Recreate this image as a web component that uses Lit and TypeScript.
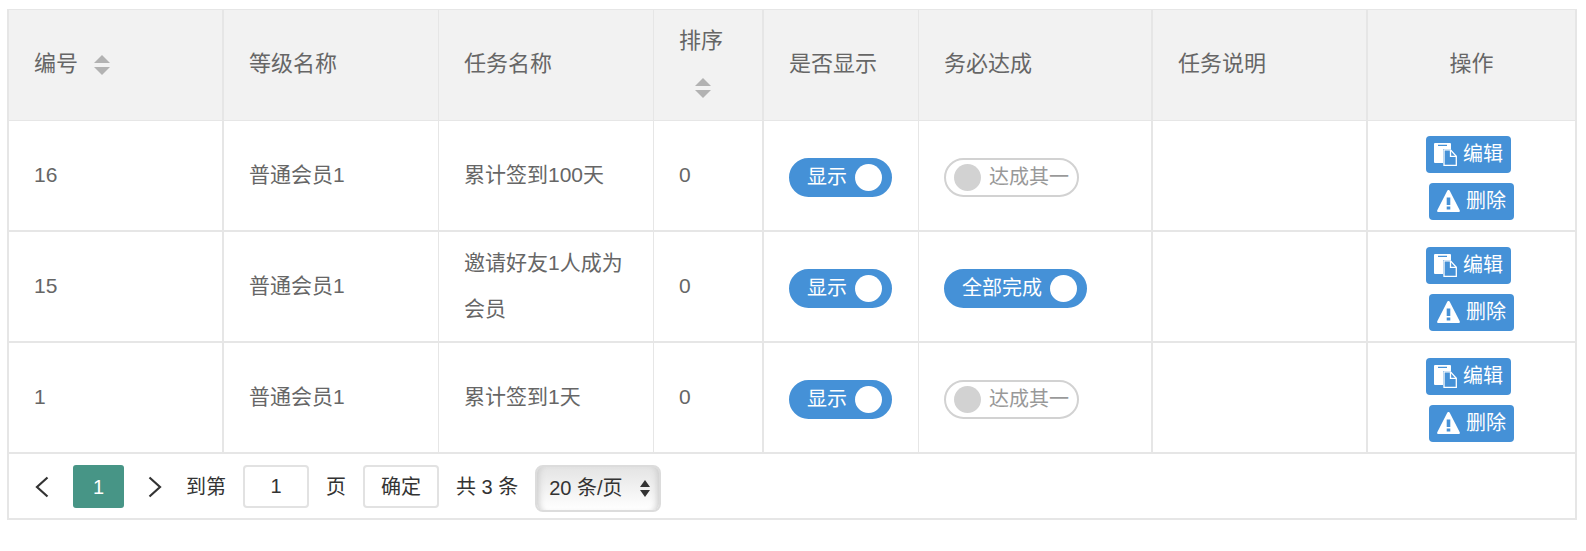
import { LitElement, html, css, svg, nothing } from "lit";
import { customElement, property, state } from "lit/decorators.js";

const fontStack = css`"Liberation Sans", "Noto Sans CJK SC", sans-serif`;

interface Task {
  id: number;
  level: string;
  name: string;
  sort: number;
  shown: boolean;
  all: boolean;
  note: string;
}

@customElement("toggle-switch")
class ToggleSwitch extends LitElement {
  @property({ type: Boolean }) checked = false;
  @property() on = "";
  @property() off = "";

  static styles = css`
    :host {
      display: inline-block;
      vertical-align: top;
    }
    .switch {
      position: relative;
      box-sizing: border-box;
      display: flex;
      align-items: center;
      gap: 8px;
      height: 39px;
      padding: 0 8px;
      border: 2px solid #d2d2d2;
      border-radius: 20px;
      background: #fff;
      color: #999;
      font: 20px/35px ${fontStack};
      white-space: nowrap;
      cursor: pointer;
    }
    .switch.on {
      flex-direction: row-reverse;
      padding-left: 16px;
      border-color: #4591d7;
      background: #4591d7;
      color: #fff;
    }
    .box {
      position: absolute;
      inset: 0;
      width: 100%;
      height: 100%;
      margin: 0;
      opacity: 0;
      cursor: pointer;
    }
    .knob {
      width: 27px;
      height: 27px;
      border-radius: 50%;
      background: #d2d2d2;
    }
    .on .knob {
      background: #fff;
    }
  `;

  render() {
    return html`<label class="switch ${this.checked ? "on" : ""}">
      <input
        class="box"
        type="checkbox"
        .checked=${this.checked}
        @change=${(e: Event) => (this.checked = (e.target as HTMLInputElement).checked)}
      />
      <span class="knob"></span>
      <span>${this.checked ? this.on : this.off}</span>
    </label>`;
  }
}

const sortIcon = svg`<svg class="sort-icon" viewBox="0 0 16 20" aria-hidden="true">
  <path d="M8 0 L16 8 H0 Z M0 12 H16 L8 20 Z" fill="#b2b2b2"/></svg>`;

const pasteIcon = svg`<svg class="icon" viewBox="0 0 23 23" aria-hidden="true">
  <path fill="#fff" fill-rule="evenodd" d="M1 0H16a1 1 0 0 1 1 1V6H9V20H1a1 1 0 0 1-1-1V1a1 1 0 0 1 1-1zM4 1.700v1.200h9V1.700z"/>
  <path fill="#4591d7" stroke="#fff" stroke-width="1.300" d="M10 6.800H16.500L22.300 13.300V22.300H10z"/>
  <path fill="none" stroke="#fff" stroke-width="1.300" d="M16.500 6.800V13.300H22.300"/></svg>`;

const warnIcon = svg`<svg class="icon" viewBox="0 0 23 23" aria-hidden="true">
  <path fill="#fff" fill-rule="evenodd" d="M11.500 0c.7 0 1.100.500 1.500 1.200l9.600 18.800c.600 1.200.1 2-1 2H1.400C.3 22-.2 21.200.4 20L10 1.200C10.400.5 10.800 0 11.500 0zM9.700 7.500V15h3.600V7.500zM9.700 16.500v3h3.600v-3z"/></svg>`;

@customElement("app-root")
class AppRoot extends LitElement {
  @state() private tasks: Task[] = [
    { id: 16, level: "普通会员1", name: "累计签到100天", sort: 0, shown: true, all: false, note: "" },
    { id: 15, level: "普通会员1", name: "邀请好友1人成为会员", sort: 0, shown: true, all: true, note: "" },
    { id: 1, level: "普通会员1", name: "累计签到1天", sort: 0, shown: true, all: false, note: "" },
  ];

  static styles = css`
    :host {
      display: block;
      padding: 9px 9px 24px 7px;
      background: #fff;
      color: #666;
      font-family: ${fontStack};
      font-size: 21px;
      line-height: 46px;
    }
    .panel {
      border: 2px solid #e6e6e6;
      border-top-width: 1px;
    }
    .grid {
      width: 100%;
      table-layout: fixed;
      border-collapse: separate;
      border-spacing: 0;
    }
    .w-id, .w-level, .w-name, .w-note { width: 215px; }
    .w-sort { width: 110px; }
    .w-shown { width: 155px; }
    .w-all { width: 234px; }
    .w-act { width: 207px; }
    th, td {
      box-sizing: border-box;
      height: 111px;
      padding: 0 25px 2px;
      border-right: 2px solid #e6e6e6;
      border-bottom: 2px solid #e6e6e6;
      text-align: left;
      font-weight: 400;
      vertical-align: middle;
    }
    th {
      background: #f2f2f2;
      border-bottom-width: 1px;
      font-size: 22px;
    }
    .thin { border-right-width: 1px; }
    .last {
      border-right: 0;
      text-align: center;
    }
    .sort {
      padding: 0 16px;
      border: 0;
      background: none;
      line-height: 46px;
      font-size: 22px;
      vertical-align: top;
      cursor: pointer;
    }
    .sort-icon {
      width: 16px;
      height: 20px;
      vertical-align: middle;
    }
    toggle-switch { margin-top: 6px; }
    .actions {
      display: flex;
      flex-direction: column;
      align-items: center;
      gap: 10px;
      padding-top: 7px;
    }
    .btn {
      display: flex;
      align-items: center;
      gap: 6px;
      height: 37px;
      padding: 0 8px;
      border: 0;
      border-radius: 4px;
      background: #4591d7;
      color: #fff;
      font: 20px/37px ${fontStack};
      cursor: pointer;
    }
    .edit { margin-right: 6px; }
    .icon {
      width: 23px;
      height: 23px;
    }
    .pager {
      display: flex;
      align-items: flex-start;
      height: 53px;
      padding-top: 11px;
      padding-left: 2px;
      color: #333;
      font-size: 20px;
      line-height: 44px;
    }
    .page {
      box-sizing: border-box;
      width: 62px;
      height: 43px;
      padding: 0;
      border: 0;
      border-radius: 3px;
      background: none;
      color: inherit;
      font: inherit;
      text-align: center;
    }
    .page.current {
      width: 51px;
      background: #479586;
      color: #fff;
    }
    .chevron {
      display: block;
      width: 14px;
      height: 22px;
      margin: 0 auto;
    }
    .jump {
      display: flex;
      gap: 17px;
    }
    .field, .go {
      box-sizing: border-box;
      height: 43px;
      border: 2px solid #e2e2e2;
      border-radius: 4px;
      background: #fff;
      color: #333;
      font: 20px/39px ${fontStack};
      text-align: center;
    }
    .field {
      width: 66px;
      padding: 0;
    }
    .go {
      width: 76px;
      padding: 1px 0 0;
    }
    .size {
      position: relative;
    }
    .select {
      box-sizing: border-box;
      display: block;
      width: 126px;
      height: 47px;
      padding: 0 12px;
      border: 2px solid #dcdcdc;
      border-radius: 8px;
      appearance: none;
      background: linear-gradient(#e4e4e4, #fff);
      box-shadow: inset 7px 0 6px -5px #cccccc, inset -7px 0 6px -5px #cccccc;
      color: #333;
      font: 20px/43px ${fontStack};
    }
    .updown {
      position: absolute;
      right: 11px;
      top: 15px;
      width: 10px;
      height: 17px;
      pointer-events: none;
    }
  `;

  private sorter(label: string) {
    return html`<button class="sort" aria-label=${label}>${sortIcon}</button>`;
  }

  private row(t: Task) {
    return html`<tr>
      <td>${t.id}</td>
      <td class="thin">${t.level}</td>
      <td class="thin">${t.name}</td>
      <td>${t.sort}</td>
      <td class="thin"><toggle-switch ?checked=${t.shown} on="显示" off="隐藏"></toggle-switch></td>
      <td><toggle-switch ?checked=${t.all} on="全部完成" off="达成其一"></toggle-switch></td>
      <td>${t.note || nothing}</td>
      <td class="last">
        <div class="actions">
          <button class="btn edit">${pasteIcon}<span>编辑</span></button>
          <button class="btn">${warnIcon}<span>删除</span></button>
        </div>
      </td>
    </tr>`;
  }

  private chevron(d: string) {
    return html`<svg class="chevron" viewBox="0 0 14 22" aria-hidden="true">
      <path d=${d} fill="none" stroke="#333" stroke-width="2.2" />
    </svg>`;
  }

  render() {
    return html`<div class="panel">
      <table class="grid">
        <colgroup>
          <col class="w-id" /><col class="w-level" /><col class="w-name" /><col class="w-sort" />
          <col class="w-shown" /><col class="w-all" /><col class="w-note" /><col class="w-act" />
        </colgroup>
        <thead>
          <tr>
            <th>编号${this.sorter("编号")}</th>
            <th class="thin">等级名称</th>
            <th class="thin">任务名称</th>
            <th>排序${this.sorter("排序")}</th>
            <th class="thin">是否显示</th>
            <th>务必达成</th>
            <th>任务说明</th>
            <th class="last">操作</th>
          </tr>
        </thead>
        <tbody>${this.tasks.map((t) => this.row(t))}</tbody>
      </table>
      <div class="pager">
        <button class="page" aria-label="上一页">${this.chevron("M12.500 1.500 L2 11 L12.500 20.500")}</button>
        <button class="page current">1</button>
        <button class="page" aria-label="下一页">${this.chevron("M1.500 1.500 L12 11 L1.500 20.500")}</button>
        <div class="jump">
          <label for="page-no">到第</label>
          <input id="page-no" class="field" type="text" value="1" />
          <span>页</span>
          <button class="go">确定</button>
          <span>共 3 条</span>
          <div class="size">
            <select class="select" aria-label="每页条数">
              <option>20 条/页</option>
              <option>50 条/页</option>
            </select>
            <svg class="updown" viewBox="0 0 10 17" aria-hidden="true">
              <path d="M5 0 L10 7 H0 Z M0 10 H10 L5 17 Z" fill="#333" />
            </svg>
          </div>
        </div>
      </div>
    </div>`;
  }
}
